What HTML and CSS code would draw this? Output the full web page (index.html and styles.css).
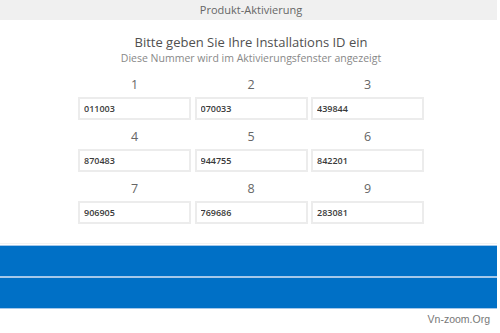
FILE: index.html
```html
<!DOCTYPE html>
<html lang="de">
<head>
    <meta charset="UTF-8">
    <meta name="viewport" content="width=device-width, initial-scale=1.0">
    <title>Produkt-Aktivierung</title>
    <link rel="stylesheet" href="styles.css">
</head>
<body>
    <div class="window">
        <div class="titlebar">Produkt-Aktivierung</div>

        <div class="intro">
            <h1>Bitte geben Sie Ihre Installations ID ein</h1>
            <p>Diese Nummer wird im Aktivierungsfenster angezeigt</p>
        </div>

        <div class="grid">
            <div class="cell"><label>1</label><input type="text" value="011003"></div>
            <div class="cell"><label>2</label><input type="text" value="070033"></div>
            <div class="cell"><label>3</label><input type="text" value="439844"></div>
            <div class="cell"><label>4</label><input type="text" value="870483"></div>
            <div class="cell"><label>5</label><input type="text" value="944755"></div>
            <div class="cell"><label>6</label><input type="text" value="842201"></div>
            <div class="cell"><label>7</label><input type="text" value="906905"></div>
            <div class="cell"><label>8</label><input type="text" value="769686"></div>
            <div class="cell"><label>9</label><input type="text" value="283081"></div>
        </div>

        <div class="actions">
            <button class="bar" type="button"></button>
            <button class="bar" type="button"></button>
        </div>

        <div class="watermark">Vn-zoom.Org</div>
    </div>
</body>
</html>
```

FILE: styles.css
```css
body {
    margin: 0;
    padding: 0;
    background: #fff;
    font-family: "Open Sans", "Noto Sans", sans-serif;
}
.window {
    width: 497px;
    height: 333px;
}
.titlebar {
    height: 20px;
    line-height: 20px;
    background: #f0f0f0;
    text-align: center;
    font-size: 11px;
    color: #666;
    padding-left: 5px;
}
.intro {
    text-align: center;
    margin-top: 14px;
    padding-left: 5px;
}
.intro h1 {
    margin: 0;
    font-size: 13px;
    font-weight: 500;
    line-height: 17px;
    color: #505050;
}
.intro p {
    margin: 0;
    font-size: 10.5px;
    line-height: 14px;
    color: #888;
}
.grid {
    display: grid;
    grid-template-columns: repeat(3, 113px);
    column-gap: 3.5px;
    row-gap: 8px;
    width: 346px;
    margin: 11px 0 0 78px;
}
.cell {
    display: flex;
    flex-direction: column;
}
.cell label {
    display: block;
    text-align: center;
    font-size: 12.5px;
    line-height: 18px;
    height: 18px;
    margin-bottom: 3px;
    color: #666;
}
.cell input {
    box-sizing: border-box;
    width: 100%;
    height: 23px;
    margin: 0;
    padding: 0 4px;
    border: 2px solid #ececec;
    background: #fff;
    font-family: "Open Sans", "Noto Sans", sans-serif;
    font-size: 9px;
    font-weight: 600;
    color: #3a3a3a;
    outline: none;
}
.actions {
    margin-top: 19px;
    border-top: 1px solid #f2f2f2;
    padding-top: 1px;
}
.bar {
    display: block;
    width: 100%;
    height: 32px;
    margin: 0;
    padding: 0;
    background: #0070c6;
    border: 1px solid #a4c8ea;
    border-left: none;
    border-right: none;
    cursor: pointer;
}
.watermark {
    text-align: right;
    font-family: "Liberation Sans", Arial, sans-serif;
    font-size: 10.5px;
    line-height: 14px;
    margin-top: 3px;
    padding-right: 7px;
    color: #777;
}
```
